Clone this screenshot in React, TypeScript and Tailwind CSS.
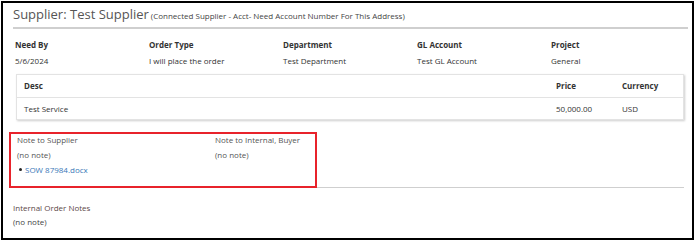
const font = { fontFamily: '"Open Sans", "Liberation Sans", sans-serif' };

const fields = [
  { label: "Need By", value: "5/6/2024" },
  { label: "Order Type", value: "I will place the order" },
  { label: "Department", value: "Test Department" },
  { label: "GL Account", value: "Test GL Account" },
  { label: "Project", value: "General" },
];

function App() {
  return (
    <div className="bg-white w-[699px] h-[243px] pt-[1px] pl-[1px]" style={font}>
      <div className="relative w-[693px] h-[239px] border-2 border-black text-[8px] text-[#333]">
        {/* header */}
        <div className="ml-[10px] mt-[3px] flex items-baseline leading-[16px]">
          <span className="text-[13px] text-[#555]">Supplier: Test Supplier</span>
          <span className="ml-[2px] text-[8px] text-[#444]">
            (Connected Supplier - Acct- Need Account Number For This Address)
          </span>
        </div>
        <div className="ml-[10px] mr-[4px] mt-[3px] h-[2px] bg-[#cfcfcf]" />

        {/* order fields */}
        <div className="ml-[12px] mt-[8px] grid grid-cols-5 w-[670px] leading-[16px]">
          {fields.map((f) => (
            <div key={f.label}>
              <div className="font-bold">{f.label}</div>
              <div>{f.value}</div>
            </div>
          ))}
        </div>

        {/* line items */}
        <div className="ml-[13px] mt-[5px] w-[668px] border border-[#e3e3e3] shadow-[1px_1px_2px_rgba(0,0,0,0.2)]">
          <div className="flex h-[23px] items-center font-bold border-b border-[#e3e3e3] px-[7px]">
            <div className="flex-1">Desc</div>
            <div className="w-[66px]">Price</div>
            <div className="w-[54px]">Currency</div>
          </div>
          <div className="flex h-[21px] items-center px-[7px]">
            <div className="flex-1">Test Service</div>
            <div className="w-[66px]">50,000.00</div>
            <div className="w-[54px]">USD</div>
          </div>
        </div>

        {/* notes */}
        <div className="ml-[6px] mr-[8px] mt-[11px] pb-[10px] border-b border-[#cfcfcf] text-[#555] leading-[15px]">
          <div className="flex pt-[1px]">
            <div className="w-[206px] pl-[8px]">
              <div>Note to Supplier</div>
              <div>(no note)</div>
              <div className="flex items-center pl-[2px]">
                <span className="w-[3px] h-[3px] rounded-full bg-[#222] mr-[3px]" />
                <span className="text-[#3a78b8]">SOW 87984.docx</span>
              </div>
            </div>
            <div>
              <div>Note to Internal, Buyer</div>
              <div>(no note)</div>
            </div>
          </div>
        </div>

        <div className="ml-[10px] mt-[13px] leading-[14px]">
          <div className="text-[#5c4848]">Internal Order Notes</div>
          <div className="text-[#444]">(no note)</div>
        </div>

        {/* annotation */}
        <div className="absolute left-[6px] top-[129px] w-[308px] h-[56px] border-2 border-[#e8232b]" />
      </div>
    </div>
  );
}

export default App;
